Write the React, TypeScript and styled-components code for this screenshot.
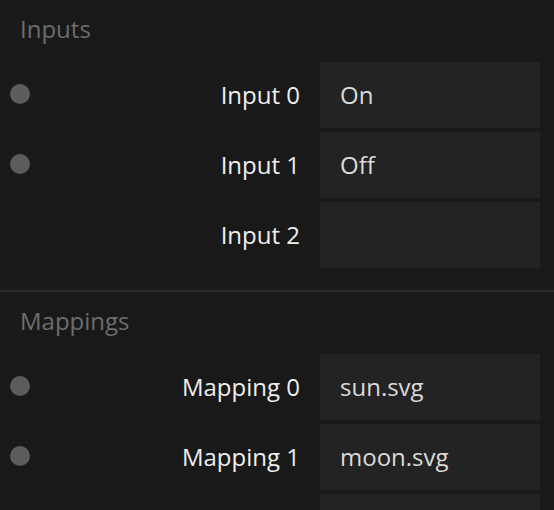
import React from "react";
import styled, { createGlobalStyle } from "styled-components";

const GlobalStyle = createGlobalStyle`
  html, body {
    margin: 0;
    padding: 0;
    background: #191919;
    overflow: hidden;
  }
  body {
    font-family: "Open Sans", "Noto Sans", sans-serif;
  }
`;

const Panel = styled.div`
  width: 554px;
  height: 510px;
  overflow: hidden;
  display: flex;
  flex-direction: column;
  background: #191919;
`;

const Section = styled.section<{ $divided?: boolean }>`
  display: flex;
  flex-direction: column;
  flex-shrink: 0;
  padding: 13px 0 22px;
  border-top: ${(p) => (p.$divided ? "2px solid #2a2a2a" : "none")};
`;

const SectionTitle = styled.div`
  padding-left: 20px;
  font-size: 24px;
  line-height: 32px;
  color: #6c6c6c;
  margin-bottom: 17px;
`;

const RowList = styled.div`
  display: flex;
  flex-direction: column;
  gap: 4px;
`;

const Row = styled.div`
  display: grid;
  grid-template-columns: 20px 1fr 220px;
  column-gap: 20px;
  align-items: center;
  height: 66px;
  padding: 0 14px 0 10px;
`;

const Dot = styled.span<{ $visible: boolean }>`
  width: 20px;
  height: 20px;
  border-radius: 50%;
  margin-top: -2px;
  background: ${(p) => (p.$visible ? "#5c5c5c" : "transparent")};
`;

const Label = styled.span`
  text-align: right;
  font-size: 24px;
  line-height: 32px;
  margin-top: -1px;
  color: #eeeeee;
`;

const ValueBox = styled.div`
  height: 66px;
  box-sizing: border-box;
  display: flex;
  align-items: center;
  padding: 0 0 1px 20px;
  background: #232323;
  font-size: 24px;
  line-height: 32px;
  color: #dadada;
`;

type Item = { key: string; label: string; value: string; dot: boolean };

const sections: { title: string; items: Item[] }[] = [
  {
    title: "Inputs",
    items: [
      { key: "i0", label: "Input 0", value: "On", dot: true },
      { key: "i1", label: "Input 1", value: "Off", dot: true },
      { key: "i2", label: "Input 2", value: "", dot: false },
    ],
  },
  {
    title: "Mappings",
    items: [
      { key: "m0", label: "Mapping 0", value: "sun.svg", dot: true },
      { key: "m1", label: "Mapping 1", value: "moon.svg", dot: true },
      { key: "m2", label: "", value: "", dot: false },
    ],
  },
];

export default function App() {
  return (
    <>
      <GlobalStyle />
      <Panel>
        {sections.map((s, i) => (
          <Section key={s.title} $divided={i > 0}>
            <SectionTitle>{s.title}</SectionTitle>
            <RowList>
              {s.items.map((it) => (
                <Row key={it.key}>
                  <Dot $visible={it.dot} />
                  <Label>{it.label}</Label>
                  <ValueBox>{it.value}</ValueBox>
                </Row>
              ))}
            </RowList>
          </Section>
        ))}
      </Panel>
    </>
  );
}
